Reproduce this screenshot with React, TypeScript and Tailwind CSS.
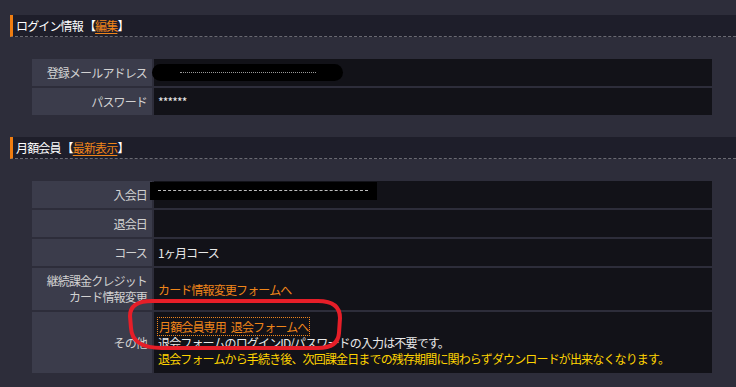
import React from "react";

const font = { fontFamily: '"Noto Sans CJK JP", "Noto Sans", sans-serif' };

function Header({ title, link }: { title: string; link: string }) {
  return (
    <div className="ml-[10px] h-[22px] bg-[#1e1e2a] border-l-[3px] border-[#f07d10] border-b border-b-[#6a6a72] border-dashed flex items-center pl-[3px] text-white text-[12px] leading-none" style={{ borderLeftStyle: "solid" }}>
      <span>{title}</span>
      <span className="ml-[1px]">【</span>
      <span className="text-[#f0851a] underline underline-offset-2">{link}</span>
      <span>】</span>
    </div>
  );
}

function Label({ children, h }: { children: React.ReactNode; h: string }) {
  return (
    <div className={`bg-[#3b3c4b] text-[#d2d2d2] flex items-center justify-end text-right pr-[5px] ${h}`}>
      {children}
    </div>
  );
}

function Value({ children, h }: { children?: React.ReactNode; h: string }) {
  return (
    <div className={`bg-[#121218] text-[#e8e8e8] flex items-center pl-[4px] ${h}`}>{children}</div>
  );
}

export default function App() {
  return (
    <div className="relative w-[736px] h-[387px] bg-[#2d2d3a] pt-[15px] overflow-hidden text-[12px] tracking-[-0.85px] leading-[15px]" style={font}>
      <Header title="ログイン情報" link="編集" />
      <div className="mt-[20px] ml-[30px] w-[684px] p-[2px] grid grid-cols-[120px_558px] gap-[2px]">
        <Label h="h-[27px]">登録メールアドレス</Label>
        <Value h="h-[27px]">
          <span className="-ml-[6px] w-[191px] h-[17px] rounded-full bg-black flex items-center pl-[28px]">
            <span className="block w-[136px] border-t border-dotted border-[#9a9a9a]" />
          </span>
        </Value>
        <Label h="h-[27px]">パスワード</Label>
        <Value h="h-[27px]">******</Value>
      </div>

      <div className="mt-[20px]">
        <Header title="月額会員" link="最新表示" />
      </div>
      <div className="mt-[20px] ml-[30px] w-[684px] p-[2px] grid grid-cols-[120px_558px] gap-[2px]">
        <Label h="h-[27px]">入会日</Label>
        <Value h="h-[27px]">
          <span className="relative -ml-[8px] -mt-[8px] w-[227px] h-[18px] bg-black flex items-center pl-[8px]">
            <span className="block w-[210px] border-t border-dashed border-[#bdbdbd]" />
          </span>
        </Value>
        <Label h="h-[27px]">退会日</Label>
        <Value h="h-[27px]" />
        <Label h="h-[27px]">コース</Label>
        <Value h="h-[27px]">1ヶ月コース</Value>
        <Label h="h-[42px]">
          <span className="leading-[16px]">
            継続課金クレジット
            <br />
            カード情報変更
          </span>
        </Label>
        <Value h="h-[42px]">
          <span className="text-[#f0851a]">カード情報変更フォームへ</span>
        </Value>
        <Label h="h-[61px]">その他</Label>
        <Value h="h-[61px]">
          <div className="leading-[16px]">
            <div>
              <span className="text-[#f0851a] outline outline-1 outline-dotted outline-[#f0851a] px-[1px]">
                月額会員専用<span className="inline-block w-[3px]" /> 退会フォームへ
              </span>
            </div>
            <div>退会フォームのログインID/パスワードの入力は不要です。</div>
            <div className="text-[#ffd400]">退会フォームから手続き後、次回課金日までの残存期間に関わらずダウンロードが出来なくなります。</div>
          </div>
        </Value>
      </div>

      <svg className="absolute left-0 top-0 pointer-events-none" width="736" height="387">
        <path
          d="M 152 301 L 318 301 Q 340 301 340 318 L 339 333 Q 338 348 318 348 L 162 348 Q 132 348 131 328 L 130 316 Q 130 301 152 301 Z"
          fill="none"
          stroke="#e61e28"
          strokeWidth="4"
        />
      </svg>
    </div>
  );
}
